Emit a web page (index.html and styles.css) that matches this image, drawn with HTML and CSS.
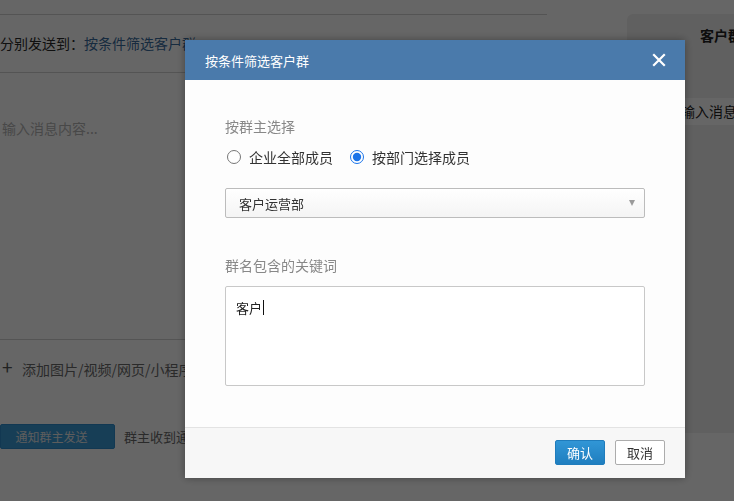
FILE: index.html
```html
<!DOCTYPE html>
<html lang="zh-CN">
<head>
<meta charset="utf-8">
<title>按条件筛选客户群</title>
<link rel="stylesheet" href="styles.css">
</head>
<body>
<div class="page">
  <div class="main">
    <div class="top"></div>
    <div class="sendto">分别发送到：<span class="link">按条件筛选客户群</span></div>
    <div class="editor"><span class="placeholder">输入消息内容...</span></div>
    <div class="attach"><span class="plus">+</span>添加图片/视频/网页/小程序</div>
    <div class="actions">
      <button class="notify">通知群主发送</button>
      <span class="hint">群主收到通知后确认即可发送</span>
    </div>
  </div>
  <div class="preview">
    <div class="preview-title">客户群</div>
    <div class="bubble">输入消息内容...</div>
  </div>
</div>

<div class="mask"></div>

<div class="modal">
  <div class="modal-head">
    <span class="modal-title">按条件筛选客户群</span>
    <svg class="close" width="14" height="14" viewBox="0 0 14 14"><path d="M2 2 L12 12 M12 2 L2 12" stroke="#fff" stroke-width="2.2" stroke-linecap="square"/></svg>
  </div>
  <div class="modal-body">
    <div class="field-label">按群主选择</div>
    <div class="radios">
      <label class="radio"><input type="radio" name="owner">企业全部成员</label>
      <label class="radio"><input type="radio" name="owner" checked>按部门选择成员</label>
    </div>
    <div class="select">
      <span>客户运营部</span>
      <span class="arrow"></span>
    </div>
    <div class="field-label second">群名包含的关键词</div>
    <div class="textarea">客户<span class="caret"></span></div>
  </div>
  <div class="modal-foot">
    <button class="btn primary">确认</button>
    <button class="btn">取消</button>
  </div>
</div>
</body>
</html>
```

FILE: styles.css
```css
html, body {
  margin: 0;
  padding: 0;
  background: #fff;
  font-family: "Noto Sans CJK SC", "Noto Sans", sans-serif;
  font-size: 14px;
  color: #333;
  overflow: hidden;
}

.page {
  display: flex;
  width: 734px;
  height: 501px;
}

.main {
  width: 547px;
  flex: none;
  display: flex;
  flex-direction: column;
}

.top {
  height: 14px;
  border-bottom: 1px solid #d2d2d2;
}

.sendto {
  height: 57px;
  line-height: 57px;
  border-bottom: 1px solid #d2d2d2;
  color: #2a2a2a;
  white-space: nowrap;
}

.link {
  color: #3a6c9e;
}

.editor {
  height: 267px;
  border-bottom: 1px solid #d2d2d2;
  padding-left: 2px;
  box-sizing: border-box;
  padding-top: 45px;
  line-height: 20px;
}

.placeholder {
  color: #b4b4b4;
}

.attach {
  height: 54px;
  line-height: 54px;
  padding-left: 2px;
  color: #6a6a6a;
  white-space: nowrap;
}

.plus {
  display: inline-block;
  width: 20px;
  font-size: 19px;
  color: #555;
}

.actions {
  margin-top: 30px;
  display: flex;
  align-items: center;
  white-space: nowrap;
}

.notify {
  width: 115px;
  height: 25px;
  border: 1px solid #2f8ccc;
  border-radius: 2px;
  background: #3a9bd8;
  color: #e8e8e8;
  font-family: inherit;
  font-size: 12px;
  padding: 0 12px 0 0;
  margin-right: 9px;
}

.hint {
  color: #6a6a6a;
  font-size: 13px;
}

.preview {
  margin-left: 80px;
  margin-top: 14px;
  flex: 1;
  height: 419px;
  background: #f0f0f0;
  border-radius: 6px 0 0 0;
}

.preview-title {
  padding-left: 73px;
  padding-top: 11px;
  line-height: 20px;
  font-weight: 600;
  color: #222;
  white-space: nowrap;
}

.bubble {
  margin-top: 53px;
  margin-left: 10px;
  height: 27px;
  line-height: 27px;
  background: #fff;
  padding-left: 44px;
  color: #222;
  white-space: nowrap;
  overflow: hidden;
}

.mask {
  position: fixed;
  inset: 0;
  background: rgba(0, 0, 0, 0.6);
}

.modal {
  position: fixed;
  left: 185px;
  top: 40px;
  width: 500px;
  height: 438px;
  background: #fdfdfd;
  box-shadow: 0 0 8px rgba(0, 0, 0, 0.35);
  display: flex;
  flex-direction: column;
}

.modal-head {
  height: 40px;
  flex: none;
  background: #4a7aab;
  display: flex;
  align-items: center;
  justify-content: space-between;
  padding: 0 19px 0 20px;
}

.modal-title {
  color: #fff;
  font-size: 13px;
}

.close {
  display: block;
}

.modal-body {
  flex: 1;
  padding: 36px 40px 0 40px;
}

.field-label {
  line-height: 20px;
  color: #888;
}

.field-label.second {
  margin-top: 37px;
}

.radios {
  margin-top: 11px;
  display: flex;
  height: 20px;
  align-items: center;
}

.radio {
  display: flex;
  align-items: center;
  color: #333;
  margin-right: 15px;
}

.radio input {
  width: 14px;
  height: 14px;
  margin: 0 8px 0 2px;
  accent-color: #1a73e8;
}

.select {
  margin-top: 21px;
  height: 30px;
  box-sizing: border-box;
  border: 1px solid #bcbcbc;
  border-radius: 2px;
  background: linear-gradient(#ffffff, #f4f4f4);
  display: flex;
  align-items: center;
  justify-content: space-between;
  padding: 0 9px 0 13px;
  color: #333;
  font-size: 13px;
}

.arrow {
  width: 0;
  height: 0;
  border-left: 3.5px solid transparent;
  border-right: 3.5px solid transparent;
  border-top: 6px solid #9a9a9a;
}

.textarea {
  margin-top: 11px;
  height: 100px;
  box-sizing: border-box;
  border: 1px solid #c8c8c8;
  border-radius: 2px;
  background: #fff;
  padding: 10px 10px;
  font-size: 13px;
  line-height: 22px;
  color: #222;
}

.caret {
  display: inline-block;
  width: 1px;
  height: 15px;
  background: #111;
  vertical-align: -2px;
  margin-left: 1px;
}

.modal-foot {
  height: 51px;
  flex: none;
  box-sizing: border-box;
  border-top: 1px solid #e3e3e3;
  background: #f7f7f7;
  display: flex;
  justify-content: flex-end;
  align-items: flex-start;
  padding: 12px 20px 0 0;
  gap: 10px;
}

.btn {
  width: 50px;
  height: 25px;
  padding: 0;
  border: 1px solid #acacac;
  border-radius: 2px;
  background: #fff;
  color: #333;
  font-family: inherit;
  font-size: 13px;
}

.btn.primary {
  background: linear-gradient(#3196d6, #1f7ebf);
  border-color: #1f7cbc;
  color: #fff;
}
```
